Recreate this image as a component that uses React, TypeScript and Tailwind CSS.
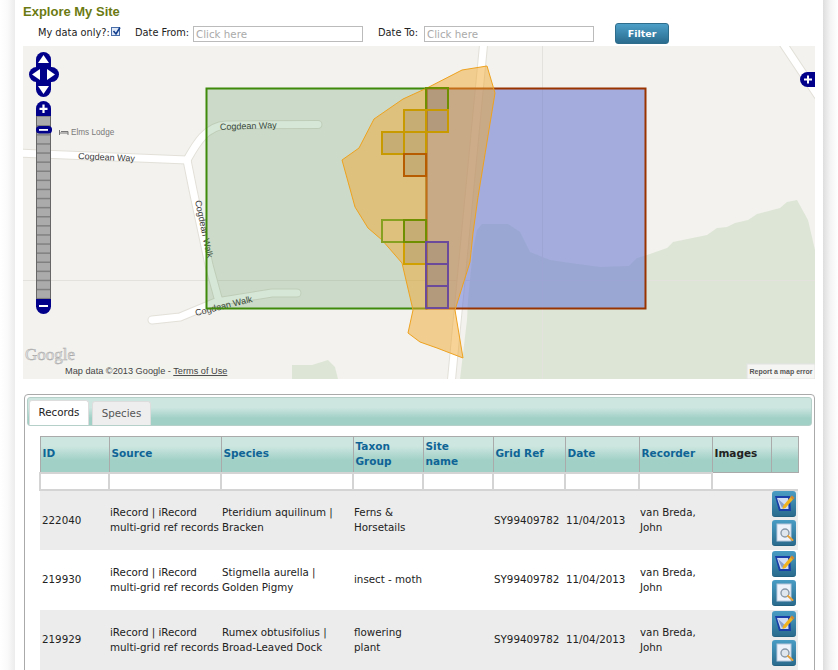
const rows = [
  { id: "222040", species: "Pteridium aquilinum | Bracken", group: "Ferns & Horsetails" },
  { id: "219930", species: "Stigmella aurella | Golden Pigmy", group: "insect - moth" },
  { id: "219929", species: "Rumex obtusifolius | Broad-Leaved Dock", group: "flowering plant" },
]

const columns = [
  { label: "ID", width: 69 },
  { label: "Source", width: 112 },
  { label: "Species", width: 132 },
  { label: "Taxon Group", width: 70 },
  { label: "Site name", width: 70 },
  { label: "Grid Ref", width: 72 },
  { label: "Date", width: 74 },
  { label: "Recorder", width: 73 },
]

const squares = [
  { x: 426, y: 88, c: "#6f8f00" },
  { x: 404, y: 110, c: "#c99a00" },
  { x: 426, y: 110, c: "#c99a00" },
  { x: 382, y: 132, c: "#c99a00" },
  { x: 404, y: 132, c: "#c99a00" },
  { x: 404, y: 154, c: "#b85c00" },
  { x: 404, y: 242, c: "#d09f00" },
  { x: 404, y: 220, c: "#6f8f00" },
  { x: 426, y: 242, c: "#6b4a9c" },
  { x: 426, y: 264, c: "#6b4a9c" },
  { x: 426, y: 286, c: "#6b4a9c" },
]

function MapDrawing() {
  return (
    <svg viewBox="23 46 792 333" className="block w-[792px] h-[333px]">
      <rect x="23" y="46" width="792" height="333" fill="#f3f2ee" />

      {/* woodland */}
      <path
        d="M460 379L467 320L468 300L473 250L477 230L482 224L508 224L520 232L530 252L550 260L563 262L600 267L629 266L637 258L647 255L667 248L673 242L707 235L717 228L727 227L735 223L748 220L757 214L780 208L787 202L797 200L808 220L815 250L815 379Z"
        fill="#dde6d6"
      />
      <path d="M292 379L292 365L312 365L328 360L335 367L338 379Z" fill="#dde6d6" />

      {/* thin boundaries */}
      <path d="M542.5 46V379M23 280.5H815" stroke="#e4e2dc" strokeWidth="1" fill="none" />

      {/* roads */}
      <g fill="none" strokeLinecap="round" strokeLinejoin="round">
        <g stroke="#e2e0d8" strokeWidth="9">
          <path d="M15 153L187 160M187 160C196 144 206 126 226 125L318 124.500" />
          <path d="M187 160L193 190L209 265L218 298M152 320L180 317L216 302L272 293L297 293" />
          <path d="M484 40L451 385" />
          <path d="M782 42L822 102" />
        </g>
        <g stroke="#ffffff" strokeWidth="7">
          <path d="M15 153L187 160M187 160C196 144 206 126 226 125L318 124.500" />
          <path d="M187 160L193 190L209 265L218 298M152 320L180 317L216 302L272 293L297 293" />
          <path d="M484 40L451 385" />
          <path d="M782 42L822 102" />
        </g>
      </g>

      <g fontFamily="'Liberation Sans', sans-serif" fontSize="9" fill="#3c3c3c">
        <text x="78" y="159" transform="rotate(2.500 78 159)">Cogdean Way</text>
        <text x="220" y="130" transform="rotate(-2 220 130)">Cogdean Way</text>
        <text x="195" y="201" transform="rotate(78 195 201)">Cogdean Walk</text>
        <text x="196" y="316" transform="rotate(-14 196 316)">Cogdean Walk</text>
        <text x="71" y="135" fill="#7a7a7a" fontSize="8.200">Elms Lodge</text>
      </g>
      <path d="M59.500 130V135M59.500 133H68V135M61 131.500H68V133" stroke="#777" strokeWidth="1" fill="none" />

      {/* boxes and polygon */}
      <rect x="206.500" y="88.500" width="220" height="220" fill="#308435" fillOpacity="0.2" stroke="#3f8a0a" strokeWidth="2" />
      <rect x="426.500" y="88.500" width="219" height="220" fill="#6e7dd0" fillOpacity="0.6" stroke="#993300" strokeWidth="2" />
      <path
        d="M342 160L359 148L374 119L403 99L427 88L462 70L487 66L495 93L478 197L473 233L470 262L455 310L463 358L437 348L420 342L408 333L413 310L402 263L382 240L368 228L355 207Z"
        fill="#f0a830"
        fillOpacity="0.5"
        stroke="#eea21f"
        strokeWidth="1"
      />
      <rect x="382" y="220" width="22" height="22" fill="#7f9a00" fillOpacity="0" stroke="#87a020" strokeWidth="2" />
      {squares.map((s) => (
        <rect key={`${s.x}-${s.y}`} x={s.x} y={s.y} width="22" height="22" fill="#555" fillOpacity="0.18" stroke={s.c} strokeWidth="2" />
      ))}

      {/* pan control */}
      <g fill="#00008b">
        <rect x="36" y="52" width="15" height="45" rx="7.500" />
        <rect x="29" y="67" width="30" height="15" rx="7.500" />
      </g>
      <g fill="#ffffff">
        <path d="M43.500 55L49 63H38Z" />
        <path d="M43.500 94L49 86H38Z" />
        <path d="M32 74.500L40 69V80Z" />
        <path d="M55 74.500L47 69V80Z" />
      </g>

      {/* zoom bar */}
      <rect x="36.500" y="116" width="14" height="183" fill="#ababab" stroke="#666" strokeWidth="1" />
      {Array.from({ length: 20 }, (_, i) => (
        <rect key={i} x="37" y={125 + i * 9.100} width="13" height="1.500" fill="#808080" />
      ))}
      <path d="M36 116V108.500A7.500 7.500 0 0 1 51 108.500V116Z" fill="#00008b" />
      <path d="M43.500 104.500V113M39.500 108.800H47.500" stroke="#fff" strokeWidth="2.200" />
      <rect x="36" y="126" width="16" height="7.500" rx="3.500" fill="#00008b" />
      <rect x="39" y="129" width="9" height="1.800" fill="#fff" />
      <path d="M36 299V306.500A7.500 7.500 0 0 0 51 306.500V299Z" fill="#00008b" />
      <rect x="39" y="305" width="9" height="2" fill="#fff" />

      {/* overview toggle */}
      <path d="M815 72H807.500A7.500 7.500 0 0 0 807.500 87H815Z" fill="#00008b" />
      <path d="M808 75.500V83.500M804 79.500H812" stroke="#fff" strokeWidth="2" />

      {/* attribution */}
      <text
        x="25"
        y="360"
        fontFamily="'Liberation Serif', serif"
        fontSize="17"
        fill="#e6e6e6"
        stroke="#a8a8a8"
        strokeWidth="0.500"
      >
        Google
      </text>
      <rect x="65" y="364" width="165" height="15" fill="#f3f2ee" fillOpacity="0.8" />
      <text x="65" y="374" fontFamily="'Liberation Sans', sans-serif" fontSize="9.200" fill="#444">
        Map data ©2013 Google - <tspan textDecoration="underline">Terms of Use</tspan>
      </text>
      <rect x="747" y="364" width="68" height="15" fill="#f5f5f3" stroke="#e2e2e2" />
      <text x="749.500" y="374" fontFamily="'Liberation Sans', sans-serif" fontSize="7" fontWeight="700" fill="#555">
        Report a map error
      </text>
    </svg>
  )
}

function EditIcon() {
  return (
    <svg viewBox="0 0 24 26" className="w-6 h-[26px]">
      <path d="M3 5H18L19 20H7Z" fill="#1b3fa8" />
      <path d="M5 7H16L16.500 18H8.500Z" fill="#cfdcf4" />
      <path d="M6 8L13 14L10 17Z" fill="#8da0c8" />
      <path d="M11 15L18.500 6L21 8.500L13.500 17L10.500 18Z" fill="#f1b31c" />
      <path d="M18.500 6L20 4.500L22.500 7L21 8.500Z" fill="#d9862a" />
    </svg>
  )
}

function ZoomIcon() {
  return (
    <svg viewBox="0 0 24 26" className="w-6 h-[26px]">
      <rect x="5" y="4" width="14" height="17" fill="#eef3fb" stroke="#b7c8dc" />
      <circle cx="13" cy="13" r="4" fill="#dfe6ee" stroke="#8a98a8" strokeWidth="1.400" />
      <path d="M16 16L20.500 20" stroke="#e8a33a" strokeWidth="2" strokeLinecap="round" />
    </svg>
  )
}

function IconButton({ children }: { children: React.ReactNode }) {
  return (
    <div className="w-6 h-[26px] rounded-[3px] bg-[linear-gradient(#4a9cc4,#2a6c8e)] border-b border-[#24607f] overflow-hidden">
      {children}
    </div>
  )
}

export default function App() {
  return (
    <div className="flex w-[838px] h-[670px] overflow-hidden bg-white text-[#222] text-[10.300px] [font-family:'DejaVu_Sans',sans-serif]">
      <div className="w-[15px] shrink-0 bg-[linear-gradient(90deg,#ffffff,#fafafa_50%,#ececec)]" />

      <main className="w-[808px] shrink-0 pl-2 pr-2">
        <h1 className="pt-1 h-[21px] text-[13px] leading-[15px] font-bold text-[#6b7a12] [font-family:'Liberation_Sans',sans-serif]">
          Explore My Site
        </h1>

        <div className="flex items-center h-[25px] pl-[15px] text-[9.800px]">
          <span className="w-[73px] whitespace-nowrap">My data only?:</span>
          <span className="relative w-[9px] h-[9px] -mt-[5px] mr-[15px] border border-[#4a6fa8] bg-[#dfe8f6]">
            <svg viewBox="0 0 9 9" className="absolute left-0 -top-[1px] w-[9px] h-[9px]">
              <path d="M1.500 4L4 7L8 0.500" fill="none" stroke="#123e8e" strokeWidth="1.600" />
            </svg>
          </span>
          <span className="w-[58px] whitespace-nowrap">Date From:</span>
          <div className="w-[170px] h-4 px-[2px] border border-[#bbb] text-[#aaa] text-[10.300px] leading-[14px]">Click here</div>
          <span className="w-[46px] ml-[15px] whitespace-nowrap">Date To:</span>
          <div className="w-[170px] h-4 px-[2px] border border-[#bbb] text-[#aaa] text-[10.300px] leading-[14px]">Click here</div>
          <div className="w-[54px] h-[21px] ml-[21px] rounded-[3px] border border-[#2f6d8c] bg-[linear-gradient(#4d9fc8,#2a6c8e)] text-white font-bold text-[9.500px] leading-[19px] text-center">
            Filter
          </div>
        </div>

        <MapDrawing />

        <section className="mt-[15px] ml-px w-[791px] h-[300px] border border-[#aaa] rounded-[4px] p-[2px]">
          <div className="flex items-end h-[29px] pl-px border border-[#b5cfc9] rounded-[3px] bg-[linear-gradient(#cde6e0,#cde6e0_35%,#a0d0c6_75%)]">
            <div className="w-[60px] h-[25px] mr-[3px] rounded-t-[3px] border border-[#ddd] border-b-0 bg-white text-center leading-[23px] text-[#222]">
              Records
            </div>
            <div className="w-[59px] h-[24px] rounded-t-[3px] border border-[#ddd] border-b-0 bg-[#eeeeee] text-center leading-[22px] text-[#555]">
              Species
            </div>
          </div>

          <table className="mt-[10px] ml-3 w-[758px] table-fixed border-collapse">
            <colgroup>
              {columns.map((c) => (
                <col key={c.label} style={{ width: c.width }} />
              ))}
              <col style={{ width: 59 }} />
              <col style={{ width: 27 }} />
            </colgroup>
            <thead>
              <tr className="h-9 bg-[linear-gradient(#cde6e0,#cde6e0_25%,#a0d0c6_65%)]">
                {columns.map((c) => (
                  <th key={c.label} className="border border-[#aaa] pl-[2px] pr-5 pb-px text-left font-bold text-[#0f6496] text-[10.500px] leading-[15px]">
                    {c.label}
                  </th>
                ))}
                <th className="border border-[#aaa] pl-[2px] pb-px text-left font-bold text-[#222] text-[10.500px]">Images</th>
                <th className="border border-[#aaa]" />
              </tr>
              <tr className="h-[17px]">
                {columns.map((c) => (
                  <td key={c.label} className="p-0 border-2 border-[#d4d4d4] bg-white" />
                ))}
                <td colSpan={2} className="border-b-2 border-[#d4d4d4]" />
              </tr>
            </thead>
            <tbody>
              {rows.map((r, i) => (
                <tr key={r.id} className={`h-[60px] ${i % 2 === 0 ? "bg-[#ececec]" : "bg-white"} leading-[15px]`}>
                  <td className="pl-[2px]">{r.id}</td>
                  <td className="pl-px whitespace-nowrap">
                    iRecord | iRecord
                    <br />
                    multi-grid ref records
                  </td>
                  <td className="pl-px">{r.species}</td>
                  <td className="pl-px">{r.group}</td>
                  <td />
                  <td className="pl-px">SY99409782</td>
                  <td className="pl-px">11/04/2013</td>
                  <td className="pl-px">van Breda, John</td>
                  <td />
                  <td className="p-0">
                    <div className="flex flex-col items-end gap-[3px] pr-[2px] pb-[3px]">
                      <IconButton>
                        <EditIcon />
                      </IconButton>
                      <IconButton>
                        <ZoomIcon />
                      </IconButton>
                    </div>
                  </td>
                </tr>
              ))}
            </tbody>
          </table>
        </section>
      </main>

      <div className="w-[15px] shrink-0 bg-[linear-gradient(90deg,#dedede,#f4f4f4_50%,#ffffff)]" />
    </div>
  )
}
